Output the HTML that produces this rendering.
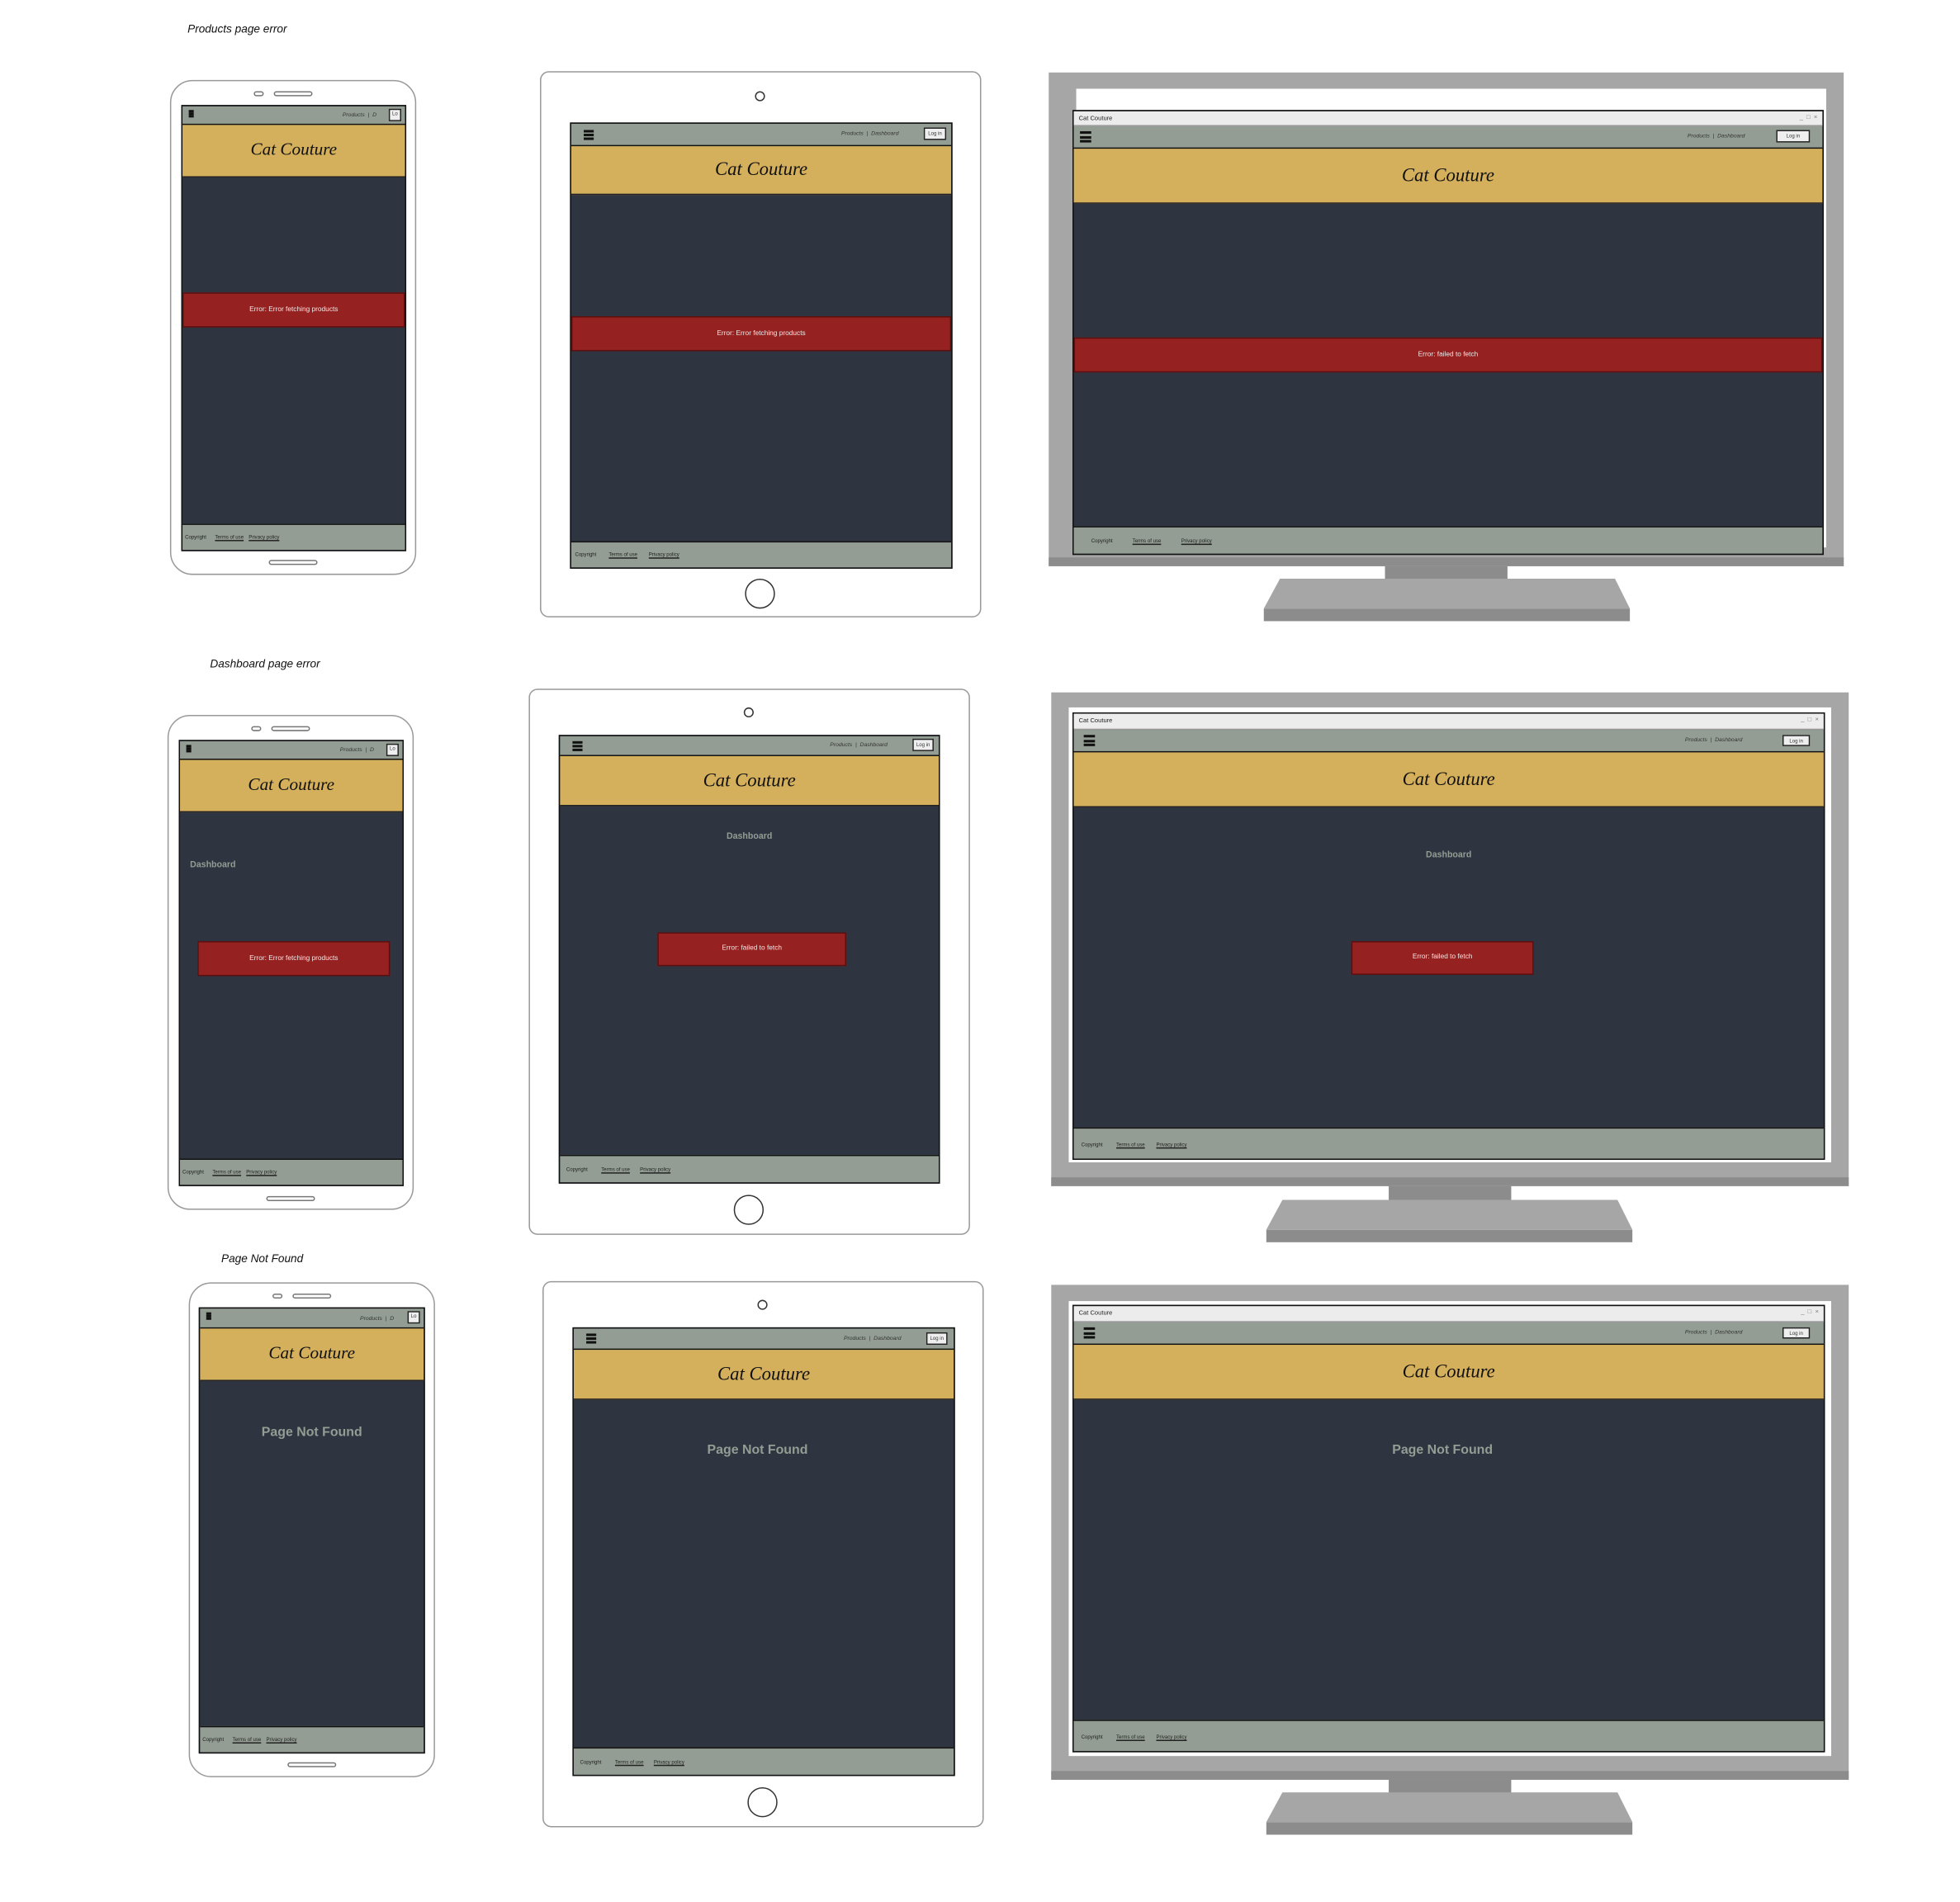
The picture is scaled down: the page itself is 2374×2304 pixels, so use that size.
<!DOCTYPE html>
<html><head><meta charset="utf-8">
<style>
*{box-sizing:border-box;margin:0;padding:0}
html,body{width:2374px;height:2304px;overflow:hidden;background:#fff}
#st{position:absolute;left:0;top:0;width:1568px;height:1522px;transform:scale(1.514);transform-origin:0 0;font-family:"Liberation Sans",sans-serif}
.a{position:absolute}
.lbl{position:absolute;font-family:"Liberation Sans",sans-serif;font-size:9px;color:#111;font-style:italic}
.ph{position:absolute;border:1px solid #999;border-radius:18px;background:#fff}
.tb{position:absolute;border:1px solid #999;border-radius:7px;background:#fff}
.mo{position:absolute;background:#a6a6a6;border-bottom:7px solid #8c8c8c}
.wh{position:absolute;background:#fff}
.s{position:absolute;background:#2e3440;border:1px solid #111;overflow:hidden}
.ttl{position:absolute;left:0;right:0;top:0;background:#ececec;font-size:5px;color:#222;padding:3px 4px;border-bottom:1px solid #999}
.nv{position:absolute;left:0;right:0;background:#939d93;border-bottom:1px solid #111}
.nv .lk{position:absolute;font-size:4.5px;color:#333;font-style:italic}
.nv .bt{position:absolute;background:#eee;border:1px solid #222;font-size:4px;color:#333;text-align:center}
.nv .hb{position:absolute;border-top:2px solid #111;border-bottom:2px solid #111}
.nv .hb:after{content:"";position:absolute;left:0;right:0;top:50%;margin-top:-1px;height:2px;background:#111}
.hd{position:absolute;left:0;right:0;background:#d4af5c;border-bottom:1px solid #222;text-align:center;font-family:"Liberation Serif",serif;font-style:italic;color:#111}
.er{position:absolute;background:#952220;border:1px solid #5a1010;color:#f3e6e6;font-size:5.5px;text-align:center}
.ft{position:absolute;left:0;right:0;bottom:0;background:#939d93;border-top:1px solid #111;font-size:4px;color:#222}
.ft span{position:absolute}
.ft u{position:absolute}
.gt{position:absolute;color:#939d93;font-weight:bold;text-align:center}
.neck{position:absolute;background:#8c8c8c}
</style></head><body><div id="st">

<!-- Row 1 -->
<div class="lbl" style="left:150px;top:18px">Products page error</div>

<div class="ph" style="left:136px;top:64px;width:197px;height:396px"></div>
<div class="a" style="left:203px;top:73px;width:8px;height:4px;border:1px solid #777;border-radius:3px"></div>
<div class="a" style="left:219px;top:73px;width:31px;height:4px;border:1px solid #777;border-radius:3px"></div>
<div class="a" style="left:215px;top:448px;width:39px;height:4px;border:1px solid #777;border-radius:3px"></div>
<div class="s" style="left:145px;top:84px;width:180px;height:357px">
 <div class="nv" style="top:0;height:15px"><div class="hb" style="left:5px;top:3px;width:4px;height:6px"></div><span class="lk" style="left:128px;top:4px">Products &nbsp;|&nbsp; D</span><div class="bt" style="left:165px;top:2px;width:10px;height:10px">Lo</div></div>
 <div class="hd" style="top:15px;height:42px;font-size:14px;line-height:42px">Cat Couture</div>
 <div class="er" style="left:0;right:0;top:149px;height:28px;line-height:26px">Error: Error fetching products</div>
 <div class="ft" style="height:21px"><span style="left:2px;top:7px">Copyright</span><u style="left:26px;top:7px">Terms of use</u><u style="left:53px;top:7px">Privacy policy</u></div>
</div>

<div class="tb" style="left:432px;top:57px;width:353px;height:437px"></div>
<div class="a" style="left:604px;top:73px;width:8px;height:8px;border:1px solid #333;border-radius:50%"></div>
<div class="a" style="left:596px;top:463px;width:24px;height:24px;border:1px solid #333;border-radius:50%"></div>
<div class="s" style="left:456px;top:98px;width:306px;height:357px">
 <div class="nv" style="top:0;height:18px"><div class="hb" style="left:10px;top:5px;width:8px;height:8px"></div><span class="lk" style="left:216px;top:5px">Products &nbsp;|&nbsp; Dashboard</span><div class="bt" style="left:282px;top:3px;width:18px;height:10px;line-height:8px">Log in</div></div>
 <div class="hd" style="top:18px;height:39px;font-size:15px;line-height:39px">Cat Couture</div>
 <div class="er" style="left:0;right:0;top:154px;height:28px;line-height:26px">Error: Error fetching products</div>
 <div class="ft" style="height:21px"><span style="left:3px;top:7px">Copyright</span><u style="left:30px;top:7px">Terms of use</u><u style="left:62px;top:7px">Privacy policy</u></div>
</div>

<div class="mo" style="left:839px;top:58px;width:636px;height:395px"></div>
<div class="wh" style="left:861px;top:71px;width:600px;height:367px"></div>
<div class="neck" style="left:1108px;top:453px;width:98px;height:21px"></div>
<svg class="a" style="left:1011px;top:463px" width="293" height="34"><polygon points="13,0 281,0 293,24 0,24" fill="#a6a6a6"/><rect x="0" y="24" width="293" height="10" fill="#8c8c8c"/></svg>
<div class="s" style="left:858px;top:88px;width:601px;height:356px">
 <div class="ttl" style="height:12px">Cat Couture<span style="position:absolute;right:4px;top:2px;color:#777">_ &nbsp;□ &nbsp;×</span></div>
 <div class="nv" style="top:12px;height:18px"><div class="hb" style="left:5px;top:4px;width:9px;height:9px"></div><span class="lk" style="left:491px;top:5px">Products &nbsp;|&nbsp; Dashboard</span><div class="bt" style="left:562px;top:3px;width:27px;height:10px;line-height:8px">Log in</div></div>
 <div class="hd" style="top:30px;height:44px;font-size:15px;line-height:44px">Cat Couture</div>
 <div class="er" style="left:0;right:0;top:181px;height:28px;line-height:26px">Error: failed to fetch</div>
 <div class="ft" style="height:22px"><span style="left:14px;top:8px">Copyright</span><u style="left:47px;top:8px">Terms of use</u><u style="left:86px;top:8px">Privacy policy</u></div>
</div>

<!-- Row 2 -->
<div class="lbl" style="left:168px;top:526px">Dashboard page error</div>

<div class="ph" style="left:134px;top:572px;width:197px;height:396px"></div>
<div class="a" style="left:201px;top:581px;width:8px;height:4px;border:1px solid #777;border-radius:3px"></div>
<div class="a" style="left:217px;top:581px;width:31px;height:4px;border:1px solid #777;border-radius:3px"></div>
<div class="a" style="left:213px;top:957px;width:39px;height:4px;border:1px solid #777;border-radius:3px"></div>
<div class="s" style="left:143px;top:592px;width:180px;height:357px">
 <div class="nv" style="top:0;height:15px"><div class="hb" style="left:5px;top:3px;width:4px;height:6px"></div><span class="lk" style="left:128px;top:4px">Products &nbsp;|&nbsp; D</span><div class="bt" style="left:165px;top:2px;width:10px;height:10px">Lo</div></div>
 <div class="hd" style="top:15px;height:42px;font-size:14px;line-height:42px">Cat Couture</div>
 <div class="gt" style="left:8px;top:96px;font-size:7px">Dashboard</div>
 <div class="er" style="left:14px;width:154px;top:160px;height:28px;line-height:26px">Error: Error fetching products</div>
 <div class="ft" style="height:21px"><span style="left:2px;top:7px">Copyright</span><u style="left:26px;top:7px">Terms of use</u><u style="left:53px;top:7px">Privacy policy</u></div>
</div>

<div class="tb" style="left:423px;top:551px;width:353px;height:437px"></div>
<div class="a" style="left:595px;top:566px;width:8px;height:8px;border:1px solid #333;border-radius:50%"></div>
<div class="a" style="left:587px;top:956px;width:24px;height:24px;border:1px solid #333;border-radius:50%"></div>
<div class="s" style="left:447px;top:588px;width:305px;height:359px">
 <div class="nv" style="top:0;height:16px"><div class="hb" style="left:10px;top:4px;width:8px;height:8px"></div><span class="lk" style="left:216px;top:4px">Products &nbsp;|&nbsp; Dashboard</span><div class="bt" style="left:282px;top:2px;width:17px;height:10px;line-height:8px">Log in</div></div>
 <div class="hd" style="top:16px;height:40px;font-size:15px;line-height:40px">Cat Couture</div>
 <div class="gt" style="left:0;right:0;top:77px;font-size:7px">Dashboard</div>
 <div class="er" style="left:78px;width:151px;top:157px;height:27px;line-height:25px">Error: failed to fetch</div>
 <div class="ft" style="height:22px"><span style="left:5px;top:8px">Copyright</span><u style="left:33px;top:8px">Terms of use</u><u style="left:64px;top:8px">Privacy policy</u></div>
</div>

<div class="mo" style="left:841px;top:554px;width:638px;height:395px"></div>
<div class="wh" style="left:855px;top:566px;width:610px;height:364px"></div>
<div class="neck" style="left:1111px;top:949px;width:98px;height:21px"></div>
<svg class="a" style="left:1013px;top:960px" width="293" height="34"><polygon points="13,0 281,0 293,24 0,24" fill="#a6a6a6"/><rect x="0" y="24" width="293" height="10" fill="#8c8c8c"/></svg>
<div class="s" style="left:858px;top:570px;width:602px;height:358px">
 <div class="ttl" style="height:13px">Cat Couture<span style="position:absolute;right:4px;top:2px;color:#777">_ &nbsp;□ &nbsp;×</span></div>
 <div class="nv" style="top:13px;height:18px"><div class="hb" style="left:8px;top:4px;width:9px;height:9px"></div><span class="lk" style="left:489px;top:5px">Products &nbsp;|&nbsp; Dashboard</span><div class="bt" style="left:567px;top:4px;width:22px;height:9px;line-height:7px">Log in</div></div>
 <div class="hd" style="top:31px;height:44px;font-size:15px;line-height:44px">Cat Couture</div>
 <div class="gt" style="left:0;right:0;top:110px;font-size:7px">Dashboard</div>
 <div class="er" style="left:222px;width:146px;top:182px;height:27px;line-height:25px">Error: failed to fetch</div>
 <div class="ft" style="height:25px"><span style="left:6px;top:10px">Copyright</span><u style="left:34px;top:10px">Terms of use</u><u style="left:66px;top:10px">Privacy policy</u></div>
</div>

<!-- Row 3 -->
<div class="lbl" style="left:177px;top:1002px">Page Not Found</div>

<div class="ph" style="left:151px;top:1026px;width:197px;height:396px"></div>
<div class="a" style="left:218px;top:1035px;width:8px;height:4px;border:1px solid #777;border-radius:3px"></div>
<div class="a" style="left:234px;top:1035px;width:31px;height:4px;border:1px solid #777;border-radius:3px"></div>
<div class="a" style="left:230px;top:1410px;width:39px;height:4px;border:1px solid #777;border-radius:3px"></div>
<div class="s" style="left:159px;top:1046px;width:181px;height:357px">
 <div class="nv" style="top:0;height:16px"><div class="hb" style="left:5px;top:3px;width:4px;height:6px"></div><span class="lk" style="left:128px;top:5px">Products &nbsp;|&nbsp; D</span><div class="bt" style="left:166px;top:2px;width:10px;height:10px">Lo</div></div>
 <div class="hd" style="top:16px;height:42px;font-size:14px;line-height:42px">Cat Couture</div>
 <div class="gt" style="left:0;right:0;top:93px;font-size:10.5px">Page Not Found</div>
 <div class="ft" style="height:21px"><span style="left:2px;top:7px">Copyright</span><u style="left:26px;top:7px">Terms of use</u><u style="left:53px;top:7px">Privacy policy</u></div>
</div>

<div class="tb" style="left:434px;top:1025px;width:353px;height:437px"></div>
<div class="a" style="left:606px;top:1040px;width:8px;height:8px;border:1px solid #333;border-radius:50%"></div>
<div class="a" style="left:598px;top:1430px;width:24px;height:24px;border:1px solid #333;border-radius:50%"></div>
<div class="s" style="left:458px;top:1062px;width:306px;height:359px">
 <div class="nv" style="top:0;height:17px"><div class="hb" style="left:10px;top:4px;width:8px;height:8px"></div><span class="lk" style="left:216px;top:5px">Products &nbsp;|&nbsp; Dashboard</span><div class="bt" style="left:282px;top:3px;width:17px;height:10px;line-height:8px">Log in</div></div>
 <div class="hd" style="top:17px;height:40px;font-size:15px;line-height:40px">Cat Couture</div>
 <div class="gt" style="left:0;right:0;top:91px;font-size:10.5px;padding-right:10px">Page Not Found</div>
 <div class="ft" style="height:22px"><span style="left:5px;top:8px">Copyright</span><u style="left:33px;top:8px">Terms of use</u><u style="left:64px;top:8px">Privacy policy</u></div>
</div>

<div class="mo" style="left:841px;top:1028px;width:638px;height:396px"></div>
<div class="wh" style="left:855px;top:1041px;width:610px;height:364px"></div>
<div class="neck" style="left:1111px;top:1424px;width:98px;height:21px"></div>
<svg class="a" style="left:1013px;top:1434px" width="293" height="34"><polygon points="13,0 281,0 293,24 0,24" fill="#a6a6a6"/><rect x="0" y="24" width="293" height="10" fill="#8c8c8c"/></svg>
<div class="s" style="left:858px;top:1044px;width:602px;height:358px">
 <div class="ttl" style="height:13px">Cat Couture<span style="position:absolute;right:4px;top:2px;color:#777">_ &nbsp;□ &nbsp;×</span></div>
 <div class="nv" style="top:13px;height:18px"><div class="hb" style="left:8px;top:4px;width:9px;height:9px"></div><span class="lk" style="left:489px;top:5px">Products &nbsp;|&nbsp; Dashboard</span><div class="bt" style="left:567px;top:4px;width:22px;height:9px;line-height:7px">Log in</div></div>
 <div class="hd" style="top:31px;height:44px;font-size:15px;line-height:44px">Cat Couture</div>
 <div class="gt" style="left:0;right:0;top:109px;font-size:10.5px;padding-right:10px">Page Not Found</div>
 <div class="ft" style="height:25px"><span style="left:6px;top:10px">Copyright</span><u style="left:34px;top:10px">Terms of use</u><u style="left:66px;top:10px">Privacy policy</u></div>
</div>

</div></body></html>
